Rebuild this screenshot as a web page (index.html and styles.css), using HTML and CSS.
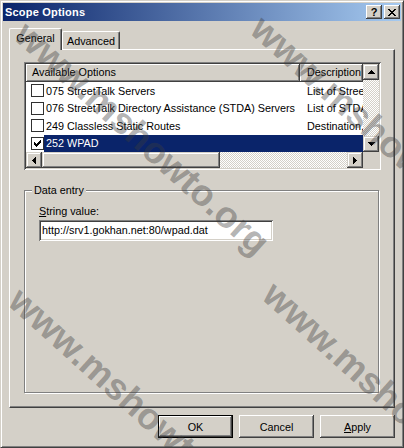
FILE: index.html
```html
<!DOCTYPE html>
<html>
<head>
<meta charset="utf-8">
<link rel="stylesheet" href="styles.css">
</head>
<body>
<div class="window">
  <div class="titlebar">
    <span class="title">Scope Options</span>
    <div class="tbtns">
      <span class="tbtn help">?</span>
      <span class="tbtn"><svg width="8" height="7" viewBox="0 0 8 7" shape-rendering="crispEdges"><path d="M0 0h2v1H0z M6 0h2v1H6z M1 1h2v1H1z M5 1h2v1H5z M2 2h4v1H2z M3 3h2v1H3z M2 4h4v1H2z M1 5h2v1H1z M5 5h2v1H5z M0 6h2v1H0z M6 6h2v1H6z" fill="#000"/></svg></span>
    </div>
  </div>
  <div class="body">
    <div class="tabs">
      <div class="tab active">General</div>
      <div class="tab">Advanced</div>
    </div>
    <div class="panel">
      <div class="list">
        <div class="lv">
          <div class="lv-head">
            <div class="hcell c1">Available Options</div>
            <div class="hcell c2">Description</div>
          </div>
          <div class="row">
            <span class="check"></span>
            <div class="rtext"><span class="name">075 StreetTalk Servers</span><span class="desc">List of StreetTalk servers</span></div>
          </div>
          <div class="row">
            <span class="check"></span>
            <div class="rtext"><span class="name">076 StreetTalk Directory Assistance (STDA) Servers</span><span class="desc">List of STDA servers</span></div>
          </div>
          <div class="row">
            <span class="check"></span>
            <div class="rtext"><span class="name">249 Classless Static Routes</span><span class="desc">Destination, mask and router IP</span></div>
          </div>
          <div class="row">
            <span class="check"><svg width="7" height="7" viewBox="0 0 7 7" shape-rendering="crispEdges"><path d="M6 0h1v1H6z M5 1h2v1H5z M0 2h1v1H0z M4 2h3v1H4z M0 3h2v1H0z M3 3h3v1H3z M0 4h5v1H0z M1 5h3v1H1z M2 6h1v1H2z" fill="#000"/></svg></span>
            <div class="rtext sel"><span class="name">252 WPAD</span><span class="desc"></span></div>
          </div>
        </div>
        <div class="vscroll">
          <span class="sbtn"><svg width="7" height="4" viewBox="0 0 7 4" shape-rendering="crispEdges"><path d="M3 0h1v1H3z M2 1h3v1H2z M1 2h5v1H1z M0 3h7v1H0z"/></svg></span>
          <span class="track"></span>
          <span class="sbtn"><svg width="7" height="4" viewBox="0 0 7 4" shape-rendering="crispEdges"><path d="M0 0h7v1H0z M1 1h5v1H1z M2 2h3v1H2z M3 3h1v1H3z"/></svg></span>
        </div>
        <div class="hscroll">
          <span class="sbtn"><svg width="4" height="7" viewBox="0 0 4 7" shape-rendering="crispEdges"><path d="M3 0h1v7H3z M2 1h1v5H2z M1 2h1v3H1z M0 3h1v1H0z"/></svg></span>
          <span class="thumb"></span>
          <span class="track"></span>
          <span class="sbtn"><svg width="4" height="7" viewBox="0 0 4 7" shape-rendering="crispEdges"><path d="M0 0h1v7H0z M1 1h1v5H1z M2 2h1v3H2z M3 3h1v1H3z"/></svg></span>
        </div>
        <div class="corner"></div>
      </div>
      <div class="group">
        <span class="legend">Data entry</span>
        <div class="label"><u>S</u>tring value:</div>
        <div class="input">http://srv1.gokhan.net:80/wpad.dat</div>
      </div>
    </div>
    <div class="buttons">
      <div class="btn default">OK</div>
      <div class="btn">Cancel</div>
      <div class="btn"><u>A</u>pply</div>
    </div>
  </div>
  <div class="wm wm-a">www.mshowto.org</div>
  <div class="wm wm-b">www.mshowto.org</div>
  <div class="wm wm-c">www.mshowto.org</div>
  <div class="wm wm-d">www.mshowto.org</div>
</div>
</body>
</html>
```
FILE: styles.css
```css
* { box-sizing: border-box; }
html, body { margin: 0; padding: 0; }
body {
  width: 404px;
  height: 448px;
  overflow: hidden;
  background: #d4d0c8;
  font-family: "Liberation Sans", Arial, sans-serif;
  font-size: 10.8px;
  color: #000;
}
.window {
  position: relative;
  width: 404px;
  height: 448px;
  overflow: hidden;
  background: #d4d0c8;
  border: 1px solid;
  border-color: #d4d0c8 #404040 #404040 #d4d0c8;
  box-shadow: inset 1px 1px #fff, inset -1px -1px #808080;
  padding: 2px;
  display: flex;
  flex-direction: column;
}
.titlebar {
  flex: none;
  height: 18px;
  background: linear-gradient(to right, #0a246a, #a6caf0);
  display: flex;
  align-items: center;
  justify-content: space-between;
  padding: 0 1px 0 2px;
}
.title { color: #fff; font-weight: bold; font-size: 11px; letter-spacing: 0.2px; }
.tbtns { display: flex; gap: 2px; }
.tbtn {
  width: 16px;
  height: 14px;
  background: #d4d0c8;
  box-shadow: inset -1px -1px #404040, inset 1px 1px #fff, inset -2px -2px #808080;
  display: flex;
  align-items: center;
  justify-content: center;
}
.tbtn.help { font-weight: bold; font-size: 11px; line-height: 14px; padding-bottom: 1px; }
.body {
  flex: 1;
  display: flex;
  flex-direction: column;
  padding: 7px 6px 7px 6px;
}
.tabs {
  height: 21px;
  display: flex;
  align-items: flex-end;
  position: relative;
  z-index: 1;
}
.tab {
  height: 18px;
  border-top: 1px solid #fff;
  border-left: 1px solid #fff;
  border-right: 1px solid #404040;
  box-shadow: inset -1px 0 #808080;
  border-radius: 2px 2px 0 0;
  text-align: center;
  padding-top: 3px;
  line-height: 13px;
  background: #d4d0c8;
}
.tab.active { width: 53px; height: 22px; margin-bottom: -1px; padding-top: 3px; }
.tab:not(.active) { width: 58px; }
.panel {
  flex: none;
  height: 359px;
  border-top: 1px solid #fff;
  border-left: 1px solid #fff;
  border-right: 1px solid #404040;
  border-bottom: 1px solid #404040;
  box-shadow: inset -1px -1px #808080;
  padding: 12px 0 0 14px;
}
.list {
  width: 357px;
  height: 108px;
  padding: 2px;
  background: #fff;
  box-shadow: inset 1px 1px #808080, inset -1px -1px #fff, inset 2px 2px #404040, inset -2px -2px #d4d0c8;
  display: grid;
  grid-template-columns: 1fr 16px;
  grid-template-rows: 1fr 16px;
}
.lv { overflow: hidden; }
.lv-head { display: flex; height: 18px; }
.hcell {
  background: #d4d0c8;
  box-shadow: inset -1px -1px #404040, inset 1px 1px #fff, inset -2px -2px #808080;
  line-height: 17px;
  white-space: nowrap;
  overflow: hidden;
}
.hcell.c1 { width: 274px; padding-left: 6px; }
.hcell.c2 { flex: 1; padding-left: 7px; }
.row { display: flex; align-items: center; height: 17.5px; padding-left: 5px; }
.check {
  flex: none;
  width: 13px;
  height: 13px;
  border: 1px solid #303030;
  background: #fff;
  display: flex;
  align-items: center;
  justify-content: center;
}
.rtext { flex: 1; display: flex; height: 100%; align-items: center; min-width: 0; }
.rtext.sel { background: #0a246a; color: #fff; }
.name { width: 256px; padding-left: 2px; white-space: nowrap; overflow: hidden; flex: none; }
.desc { flex: 1; padding-left: 7px; white-space: nowrap; overflow: hidden; min-width: 0; }
.vscroll { display: flex; flex-direction: column; }
.hscroll { display: flex; }
.sbtn {
  flex: none;
  width: 16px;
  height: 16px;
  background: #d4d0c8;
  box-shadow: inset -1px -1px #404040, inset 1px 1px #d4d0c8, inset -2px -2px #808080, inset 2px 2px #fff;
  display: flex;
  align-items: center;
  justify-content: center;
}
.track {
  flex: 1;
  background: repeating-conic-gradient(#fff 0 25%, #d4d0c8 0 50%) 0 0 / 2px 2px;
}
.thumb {
  flex: none;
  width: 178px;
  background: #d4d0c8;
  box-shadow: inset -1px -1px #404040, inset 1px 1px #d4d0c8, inset -2px -2px #808080, inset 2px 2px #fff;
}
.corner { background: #d4d0c8; }
.group {
  position: relative;
  margin-top: 20px;
  width: 355px;
  height: 203px;
  border: 1px solid #808080;
  box-shadow: inset 1px 1px #fff, 1px 1px #fff;
  padding: 14px 0 0 14px;
}
.legend {
  position: absolute;
  top: -7px;
  left: 7px;
  padding: 0 2px;
  line-height: 13px;
  background: #d4d0c8;
}
.label { line-height: 13px; }
.input {
  margin-top: 2px;
  width: 234px;
  height: 21px;
  background: #fff;
  box-shadow: inset 1px 1px #808080, inset -1px -1px #fff, inset 2px 2px #404040, inset -2px -2px #d4d0c8;
  padding: 2px 3px;
  line-height: 17px;
  white-space: nowrap;
}
.buttons {
  margin-top: 7px;
  height: 23px;
  display: flex;
  justify-content: flex-end;
  gap: 6px;
}
.btn {
  width: 75px;
  height: 23px;
  background: #d4d0c8;
  box-shadow: inset -1px -1px #404040, inset 1px 1px #fff, inset -2px -2px #808080;
  display: flex;
  align-items: center;
  justify-content: center;
}
.btn.default {
  border: 1px solid #000;
}
.wm {
  position: absolute;
  z-index: 5;
  pointer-events: none;
  white-space: nowrap;
  font-family: "Liberation Sans", Arial, sans-serif;
  font-weight: bold;
  font-size: 37px;
  line-height: 37px;
  color: rgba(60, 60, 60, 0.4);
  transform-origin: 0 0;
  transform: rotate(42deg);
}
.wm-a { left: 32px; top: 14px; }
.wm-b { left: 268px; top: 8px; }
.wm-c { left: 26px; top: 280px; }
.wm-d { left: 280px; top: 274px; }
```
